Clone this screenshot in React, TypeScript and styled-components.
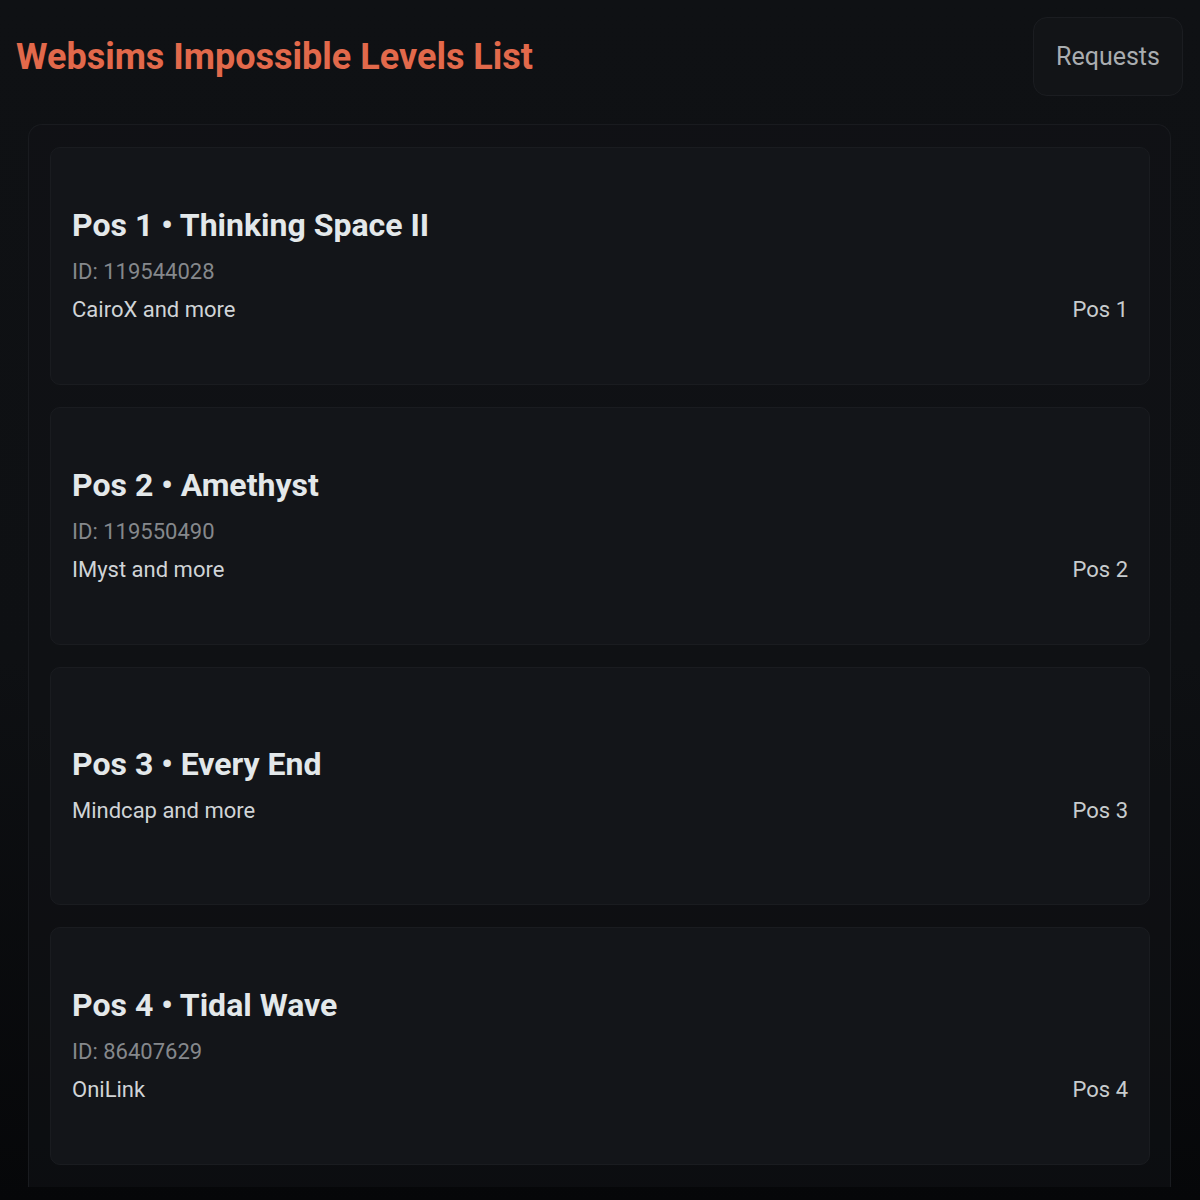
import React from "react";
import styled, { createGlobalStyle } from "styled-components";

const GlobalStyle = createGlobalStyle`
  html, body {
    margin: 0;
    padding: 0;
    height: 100%;
    overflow: hidden;
  }

  body {
    font-family: Roboto, "Liberation Sans", sans-serif;
    background: linear-gradient(180deg, #0f1114 0%, #0e1013 55%, #060709 100%);
    color: #e3e8ea;
  }
`;

const Page = styled.div`
  box-sizing: border-box;
  height: 1200px;
  padding: 16px 17px 0 16px;
  display: flex;
  flex-direction: column;
`;

const Header = styled.header`
  display: flex;
  justify-content: space-between;
  align-items: center;
  height: 79px;
  margin-top: 1px;
`;

const Title = styled.h1`
  margin: 0;
  font-size: 36px;
  font-weight: 700;
  color: #e2694b;
`;

const RequestsButton = styled.button`
  box-sizing: border-box;
  height: 79px;
  width: 150px;
  border-radius: 14px;
  border: 1px solid #1b1d21;
  background: #121417;
  color: #a9adb0;
  font-family: Roboto, "Liberation Sans", sans-serif;
  font-size: 25px;
  cursor: pointer;
`;

const Panel = styled.section`
  box-sizing: border-box;
  margin: 28px 12px 0 12px;
  height: 1063px;
  padding: 22px 20px 0 21px;
  border: 1px solid #191b1f;
  border-bottom: none;
  border-radius: 14px 14px 0 0;
  background: rgba(16, 18, 21, 0.6);
  overflow: hidden;
  display: flex;
  flex-direction: column;
  gap: 22px;
`;

const Card = styled.article`
  box-sizing: border-box;
  flex-shrink: 0;
  min-height: 238px;
  padding: 0 21px 0 21px;
  border: 1px solid #1a1c20;
  border-radius: 10px;
  background: #131519;
  display: flex;
  flex-direction: column;
  justify-content: center;
`;

const CardTitle = styled.h2`
  margin: 0 0 14px;
  font-size: 32px;
  line-height: 34px;
  font-weight: 700;
  color: #e3e8ea;
`;

const LevelId = styled.div`
  font-size: 22px;
  line-height: 31px;
  color: #85888c;
  margin-bottom: 7px;
`;

const Footer = styled.div`
  display: flex;
  justify-content: space-between;
  align-items: center;
  font-size: 22px;
  line-height: 31px;
`;

const Creator = styled.span`
  color: #d0d4d7;
`;

const Position = styled.span`
  color: #c8ccce;
`;

type Level = {
  pos: number;
  name: string;
  id?: string;
  creator: string;
};

const levels: Level[] = [
  { pos: 1, name: "Thinking Space II", id: "119544028", creator: "CairoX and more" },
  { pos: 2, name: "Amethyst", id: "119550490", creator: "IMyst and more" },
  { pos: 3, name: "Every End", creator: "Mindcap and more" },
  { pos: 4, name: "Tidal Wave", id: "86407629", creator: "OniLink" },
];

const LevelCard = ({ level }: { level: Level }) => (
  <Card>
    <CardTitle>
      Pos {level.pos} • {level.name}
    </CardTitle>
    {level.id && <LevelId>ID: {level.id}</LevelId>}
    <Footer>
      <Creator>{level.creator}</Creator>
      <Position>Pos {level.pos}</Position>
    </Footer>
  </Card>
);

export default function App() {
  return (
    <Page>
      <GlobalStyle />
      <Header>
        <Title>Websims Impossible Levels List</Title>
        <RequestsButton>Requests</RequestsButton>
      </Header>
      <Panel>
        {levels.map((level) => (
          <LevelCard key={level.pos} level={level} />
        ))}
      </Panel>
    </Page>
  );
}
